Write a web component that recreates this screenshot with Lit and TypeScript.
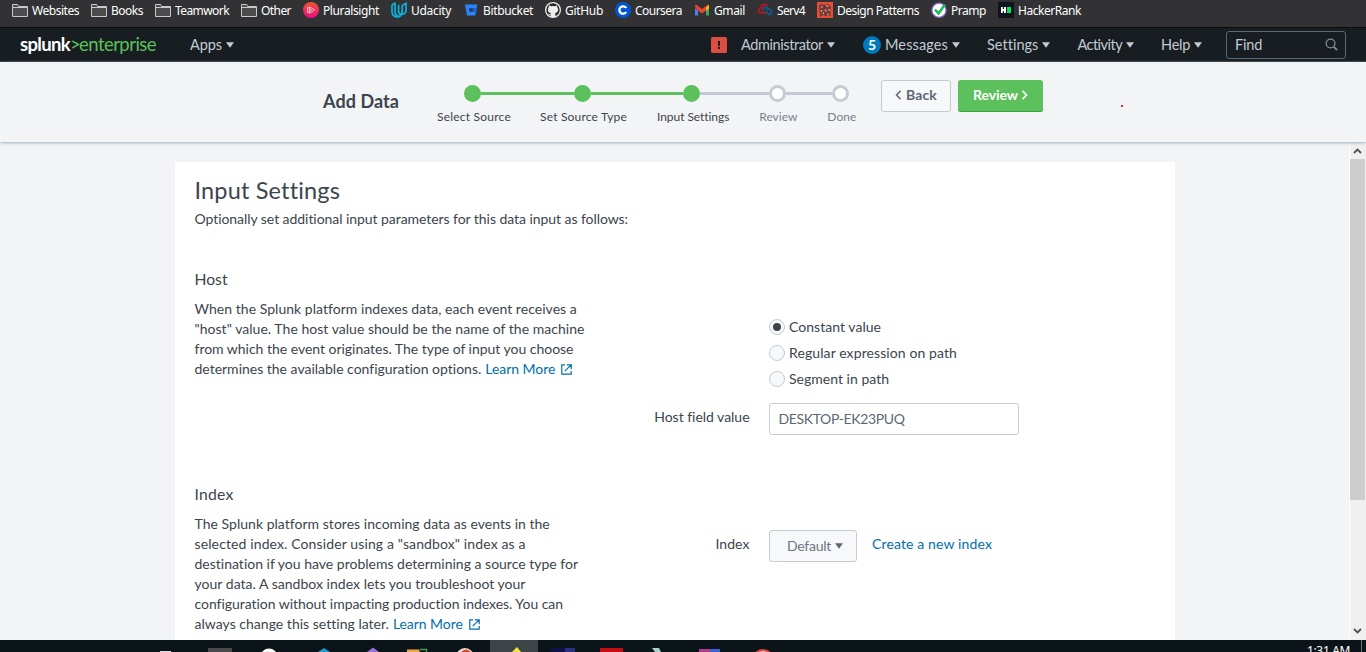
import { LitElement, html, css, svg } from "lit";
import { customElement, property, query } from "lit/decorators.js";

/** A single line of text tracked out (or in) so that it spans a given width. */
@customElement("fit-text")
class FitText extends LitElement {
  @property() text = "";
  @property({ type: Number }) w = 0;
  @query(".t") t!: HTMLElement;
  static styles = css`
    :host { display: inline-block; white-space: pre; }
    .t { display: inline-block; }
  `;
  updated() {
    this.t.style.letterSpacing = "0";
    const natural = this.t.getBoundingClientRect().width;
    this.t.style.letterSpacing = `${(this.w - natural) / this.text.length}px`;
  }
  render() {
    return html`<span class="t">${this.text}</span>`;
  }
}

const fit = (text: string, w: number) => html`<fit-text .text=${text} .w=${w}></fit-text>`;

const folder = svg`<path d="M.5 2.5h5.2l1 2h8.8v10H.5z" fill="#4b4b4d" stroke="#c9c9ca"/><path d="M1 5.5h14" stroke="#c9c9ca"/>`;

const icons: Record<string, unknown> = {
  folder,
  pluralsight: svg`<defs><linearGradient id="ps" x2="0" y2="1"><stop offset="0" stop-color="#f0552f"/><stop offset="1" stop-color="#ec0b86"/></linearGradient></defs><circle cx="8" cy="8" r="8" fill="url(#ps)"/><path d="M6.5 4.8l5.2 3.2-5.2 3.2zM4.5 5.3v5.4l4-2.7z" fill="none" stroke="#ffc9cf" stroke-width=".9"/>`,
  udacity: svg`<path d="M1 2.8l3-1.4v8.2c0 2.8 1.6 4.6 4 4.6M1 2.8v6.8c0 3.6 2.2 5.3 4.8 5.3 3.4 0 5.4-2 5.4-5.5V3.2M7.6 2.7v6.5c0 2 .9 3.1 2.7 3.1 3 0 4.8-1.6 4.8-4.6V1.4l-3.7 1.9" fill="none" stroke="#08b3df" stroke-width="1.7"/>`,
  bitbucket: svg`<path d="M2 2.5h12.3l-2 11H4z" fill="#2684ff"/><path d="M6 6h8l-.6 4H6.8z" fill="#1763d8"/><path d="M6.1 6.4h3.9l-.6 3.2H6.7z" fill="#323234"/>`,
  github: svg`<circle cx="8" cy="8" r="8" fill="#eee"/><circle cx="8" cy="8" r="6.7" fill="#26272b"/><path d="M4 3.2l2 1.1q2-.5 4 0l2-1.1.4 2.4q.9 1 .7 2.5c-.2 2-1.3 2.9-3.2 3.2q.6.6.6 1.8v2H5.7v-1.8c-2 .3-2-1.4-3-1.8 1.4-.2 1.6 1.1 3 .8q0-.7.4-1.1C4 10.800 3 10 2.900 8q0-1.400.7-2.400z" fill="#eee"/>`,
  coursera: svg`<circle cx="8" cy="8" r="8" fill="#0056d2"/><path d="M11.200 10a3.700 3.700 0 1 1 0-4" fill="none" stroke="#fff" stroke-width="2.300"/>`,
  gmail: svg`<path d="M1 3.500v10h3V8z" fill="#4285f4"/><path d="M12 8v5.500h3v-10z" fill="#34a853"/><path d="M1 3v3.500l3 2.300V4.600z" fill="#c5221f"/><path d="M12 4.600v4.200l3-2.300V3z" fill="#fbbc04"/><path d="M2 2.500L8 7l6-4.500 1 1.500-3 4.600-4 3-4-3L1 4z" fill="#ea4335"/><path d="M12 5.200L15 3v3.200l-3 2.400z" fill="#fbbc04"/>`,
  serv4: svg`<path d="M9 10.700H4.300C.5 10.300 .8 6 4 6c.7-4 4.600-4.200 6.500-1.800" fill="none" stroke="#b4161f" stroke-width="2"/><path d="M6 8.600c-.5-3.300 3.700-4.200 5-1.700 3.700-.2 4.900 4.300 1.400 5.600L8.500 9.300" fill="none" stroke="#17568a" stroke-width="2"/>`,
  patterns: svg`<path d="M0 0h16v16H0z" fill="#e94b37"/><path d="M2 3l3-1 2 1 4-1 3 3-1 4 1 5-3-1-2 1-3-1-3 2z" fill="#6b3a34"/><path d="M4 4.500l1.500 1M9 3.500l2.500 1M4 8l1 2M8 7.500l1.500 2M12 7v2M6 12l1-1.500M11 11.500v1.500" stroke="#d9b5a6" stroke-width="1.200"/><path d="M6 6.500l2 4M10 5.500l1 3M4 11v2" stroke="#c9271c"/>`,
  pramp: svg`<circle cx="8" cy="8.200" r="7.100" fill="#fff" stroke="#8a63c9" stroke-width="1.300"/><path d="M4 7.500l3.500 4L14 2.500" fill="none" stroke="#1bb85a" stroke-width="2.600"/>`,
  hackerrank: svg`<path d="M0 0h16v16H0z" fill="#0e141e"/><path d="M3 5h1.800v2H6V5h2v6H6V9H4.800v2H3z" fill="#fff"/><path d="M9 5h4v6H9z" fill="#05e35e"/>`,
};

const bookmarks: [string, string, number][] = [
  ["folder", "Websites", 47], ["folder", "Books", 32], ["folder", "Teamwork", 54], ["folder", "Other", 30],
  ["pluralsight", "Pluralsight", 56], ["udacity", "Udacity", 40], ["bitbucket", "Bitbucket", 50],
  ["github", "GitHub", 38], ["coursera", "Coursera", 47], ["gmail", "Gmail", 31], ["serv4", "Serv4", 28],
  ["patterns", "Design Patterns", 82], ["pramp", "Pramp", 35], ["hackerrank", "HackerRank", 63],
];

const hostText: [string, number][] = [
  ["When the Splunk platform indexes data, each event receives a", 382],
  ['"host" value. The host value should be the name of the machine', 390],
  ["from which the event originates. The type of input you choose", 379],
  ["determines the available configuration options.", 287],
];
const indexText: [string, number][] = [
  ["The Splunk platform stores incoming data as events in the", 355],
  ['selected index. Consider using a "sandbox" index as a', 331],
  ["destination if you have problems determining a source type for", 384],
  ["your data. A sandbox index lets you troubleshoot your", 331],
  ["configuration without impacting production indexes. You can", 369],
  ["always change this setting later.", 194],
];

@customElement("app-root")
class AppRoot extends LitElement {
  static styles = css`
    :host { display: flex; flex-direction: column; width: 1366px; height: 652px; overflow: hidden;
      font: 14px/20px Lato, "Open Sans", sans-serif; color: #3c444d; background: #f2f4f5; }
    * { box-sizing: border-box; }
    svg { display: block; flex: none; }
    .bookmarks { flex: none; display: flex; gap: 12px; height: 28px; padding: 2px 12px 0; background: #323234;
      border-bottom: 1px solid #0c0d0e; color: #fff; font: 12px/17px "Noto Sans", "Open Sans", sans-serif; }
    .bm { display: flex; gap: 4px; height: 17px; }
    .nav { flex: none; display: flex; align-items: center; height: 34px; padding: 0 20px; background: #171d21;
      border-bottom: 1px solid #2b3033; color: #c3cbd4; font-size: 14.500px; }
    .logo { display: flex; width: 136px; font-size: 18.500px; line-height: 24px; color: #5cc05c; padding-bottom: 1px; }
    .logo b { color: #fff; font-weight: 700; }
    .menu { display: flex; align-items: center; gap: 4px; }
    .caret { width: 8px; height: 6px; fill: currentColor; }
    .apps { margin-left: 34px; }
    .alert { margin-left: 477px; width: 16px; height: 16px; }
    .admin { margin-left: 14px; }
    .messages { margin-left: 28px; }
    .badge { width: 18px; height: 18px; border-radius: 50%; background: #007abd; color: #fff; font-weight: 700;
      font-size: 14px; line-height: 18px; text-align: center; }
    .gap27 { margin-left: 27px; }
    .find { display: flex; align-items: center; justify-content: space-between; margin-left: 24px; width: 120px;
      height: 28px; border: 1px solid #5c6773; border-radius: 3px; padding: 0 7px 0 8px; }
    .head { flex: none; display: flex; align-items: flex-start; height: 80px; padding-left: 323px; background: #f2f4f5;
      box-shadow: 0 1px 3px #9fb0c0; z-index: 1; }
    .head h1 { margin: 27px 0 0; width: 114px; font-size: 18px; line-height: 24px; font-weight: 700; }
    .steps { width: 444px; padding-top: 23px; }
    .track { display: flex; align-items: center; padding-left: 27px; height: 17px; }
    .dot { width: 17px; height: 17px; border-radius: 50%; border: 3px solid #c3cbd4; background: #fff; }
    .done { background: #5cc05c; border-color: #5cc05c; }
    .bar { height: 3px; background: #c3cbd4; }
    .green { background: #5cc05c; }
    .b1 { width: 93px; } .b2 { width: 92px; } .b3 { width: 69px; } .b4 { width: 46px; }
    .labels { display: flex; margin-top: 6px; font-size: 12px; line-height: 18px; }
    .labels .l2 { margin-left: 29px; }
    .labels .l3, .labels .l4 { margin-left: 30px; }
    .muted { color: #76828e; }
    .btn { display: flex; align-items: center; height: 32px; margin-top: 18px; padding-bottom: 2px; border-radius: 3px; font-weight: 700; }
    .back { width: 70px; padding-left: 13px; gap: 4px; border: 1px solid #c3cbd4; background: #f7f8fa; color: #5c6773; }
    .review { width: 85px; padding-left: 15px; gap: 3px; margin-left: 7px; background: #5cc05c; color: #fff;
      box-shadow: inset 0 -1px #40a540; }
    .spot { width: 1.500px; height: 1.500px; background: #e42b2b; margin: 43px 0 0 78px; }
    .main { flex: none; display: flex; justify-content: space-between; height: 498px; padding-left: 175px; overflow: hidden; }
    .card { width: 1000px; height: 478px; margin-top: 20px; background: #fff; padding: 14px 19px 0 19.500px; overflow: hidden; }
    h2 { margin: 0; font-size: 23.500px; line-height: 29px; padding-bottom: 1px; font-weight: 400; }
    .sub { height: 20px; margin: 3px 0 40px; }
    .section { display: grid; grid-template-columns: 420px 115px 1fr; column-gap: 20px; height: 215px; }
    .section + .section { padding: 0; }
    h3 { margin: 0 0 10px; font-size: 15.700px; line-height: 20px; font-weight: 400; }
    .line { display: flex; height: 20px; }
    .link { color: #006eaa; }
    .more { display: flex; gap: 6px; margin-left: 4px; }
    .more svg { margin-top: 5px; }
    .label { display: flex; justify-content: flex-end; }
    .host-label { padding-top: 138px; }
    .idx-label { padding-top: 50px; }
    .radios { padding-top: 45px; margin-left: -.5px; }
    .radio { display: flex; align-items: center; gap: 4px; height: 26px; }
    .ring { display: grid; place-items: center; width: 16px; height: 16px; border: 1px solid #c3cbd4; border-radius: 50%; background: #f7f8fa; }
    .pip { width: 8px; height: 8px; border-radius: 50%; background: #3c444d; }
    .input { width: 250px; height: 32px; margin-top: 11px; border: 1px solid #c3cbd4; border-radius: 3px; padding: 5px 8.500px; color: #5c6773; }
    .pick { display: flex; padding-top: 46px; gap: 15px; margin-left: -.5px; }
    .pick .link { padding-top: 4px; }
    .select { display: flex; align-items: center; gap: 4px; width: 88px; height: 32px; border: 1px solid #c3cbd4; border-radius: 3px;
      background: #f7f8fa; color: #6b7785; padding: 0 0 1px 17px; }
    .select .caret { color: #5c6773; }
    .scroll { display: flex; flex-direction: column; width: 17px; background: #f0f0f0; border-left: 1px solid #fff; padding: 6px 1px 6px 0; }
    .scroll svg { margin-left: 3px; }
    .thumb { height: 341px; margin: 5px 0 auto; background: #cdcdcd; }
    .task { flex: none; display: flex; height: 12px; background: #0b1419; overflow: hidden; color: #fff; font: 12px/16px "Noto Sans", "Open Sans", sans-serif; }
    .clock { padding-top: 3px; margin-left: 7px; height: 20px; }
    .edge { width: 1px; height: 12px; background: #69737a; margin-left: 11px; }
  `;

  caret() {
    return html`<svg class="caret" viewBox="0 0 8 6"><path d="M0 .3h8L4 5.700z"/></svg>`;
  }
  menu(cls: string, text: string, w: number) {
    return html`<div class="menu ${cls}">${fit(text, w)}${this.caret()}</div>`;
  }
  lines(rows: [string, number][]) {
    return rows.map(([t, w], i) => html`<div class="line">${fit(t, w)}${i === rows.length - 1
      ? html`<span class="link more">${fit("Learn More", 70)}<svg width="11" height="11" viewBox="0 0 11 11" fill="none" stroke="currentColor" stroke-width="1.200"><path d="M4 .8H.8v9.400h9.400V7M3.800 7.200l5.800-5.800M5.800.8h4.400v4.400"/></svg></span>`
      : ""}</div>`);
  }
  radio(text: string, w: number, on = false) {
    return html`<div class="radio"><span class="ring">${on ? html`<span class="pip"></span>` : ""}</span>${fit(text, w)}</div>`;
  }

  render() {
    return html`
      <div class="bookmarks">${bookmarks.map(([i, t, w]) => html`<div class="bm"><svg width="16" height="16" viewBox="0 0 16 16">${icons[i]}</svg>${fit(t, w)}</div>`)}</div>
      <div class="nav">
        <div class="logo"><b>${fit("splunk", 50)}</b>${fit(">", 9)}${fit("enterprise", 77)}</div>
        ${this.menu("apps", "Apps", 32)}
        <svg class="alert" viewBox="0 0 16 16"><rect width="16" height="16" rx="1.500" fill="#dc4e41"/><path d="M7 4h2v5H7zM7 10h2v2H7z" fill="#171d21"/></svg>
        ${this.menu("admin", "Administrator", 82)}
        <div class="menu messages"><span class="badge">5</span>${fit("Messages", 63)}${this.caret()}</div>
        ${this.menu("gap27", "Settings", 51)}
        ${this.menu("gap27", "Activity", 45)}
        ${this.menu("gap27", "Help", 29)}
        <div class="find">${fit("Find", 27)}<svg width="13" height="13" viewBox="0 0 14 14" fill="none" stroke="#818d99"><circle cx="6" cy="6" r="4.700" stroke-width="1.400"/><path d="M9.500 9.500l3.500 3.500" stroke-width="2"/></svg></div>
      </div>
      <div class="head">
        <h1>${fit("Add Data", 76)}</h1>
        <div class="steps">
          <div class="track">
            <span class="dot done"></span><span class="bar green b1"></span><span class="dot done"></span><span class="bar green b2"></span><span class="dot done"></span><span class="bar b3"></span><span class="dot"></span><span class="bar b4"></span><span class="dot"></span>
          </div>
          <div class="labels">
            ${fit("Select Source", 74)}<span class="l2">${fit("Set Source Type", 87)}</span><span class="l3">${fit("Input Settings", 72)}</span><span class="l4 muted">${fit("Review", 38)}</span><span class="l3 muted">${fit("Done", 29)}</span>
          </div>
        </div>
        <div class="btn back"><svg width="7" height="10" viewBox="0 0 7 10"><path d="M5.500.8L1.500 5l4 4.200" fill="none" stroke="currentColor" stroke-width="1.500"/></svg>${fit("Back", 31)}</div>
        <div class="btn review">${fit("Review", 45)}<svg width="7" height="10" viewBox="0 0 7 10"><path d="M1.500.8l4 4.200-4 4.200" fill="none" stroke="currentColor" stroke-width="1.700"/></svg></div>
        <span class="spot"></span>
      </div>
      <div class="main">
        <div class="card">
          <h2>${fit("Input Settings", 145)}</h2>
          <div class="sub">${fit("Optionally set additional input parameters for this data input as follows:", 434)}</div>
          <div class="section">
            <div><h3>${fit("Host", 33)}</h3>${this.lines(hostText)}</div>
            <div class="label host-label">${fit("Host field value", 95)}</div>
            <div class="radios">
              ${this.radio("Constant value", 92, true)}
              ${this.radio("Regular expression on path", 168)}
              ${this.radio("Segment in path", 100)}
              <div class="input">${fit("DESKTOP-EK23PUQ", 126)}</div>
            </div>
          </div>
          <div class="section">
            <div><h3>${fit("Index", 39)}</h3>${this.lines(indexText)}</div>
            <div class="label idx-label">${fit("Index", 34)}</div>
            <div class="pick"><div class="select">${fit("Default", 44)}${this.caret()}</div><span class="link">${fit("Create a new index", 120)}</span></div>
          </div>
        </div>
        <div class="scroll">
          <svg width="9" height="6" viewBox="0 0 9 6"><path d="M1 5l3.500-3.500L8 5" fill="none" stroke="#505050" stroke-width="1.800"/></svg>
          <div class="thumb"></div>
          <svg width="9" height="6" viewBox="0 0 9 6"><path d="M1 1l3.500 3.500L8 1" fill="none" stroke="#505050" stroke-width="1.800"/></svg>
        </div>
      </div>
      <div class="task">
        <svg width="1300" height="12" viewBox="0 0 1300 12">
          <path d="M160 11h11v1h-11z" fill="#ddd"/>
          <path d="M208 8h24v4h-24z" fill="#4a4a4c"/>
          <circle cx="269" cy="17" r="8.500" fill="#fff"/>
          <path d="M318 12l6-4 6 4z" fill="#1c9ad6"/>
          <path d="M367 12l6-4.500 6 4.500z" fill="#9a6fd8"/>
          <path d="M407 12V9.500h12l1 2.500z" fill="#f0a742"/><path d="M420 9.500h6.500V12" fill="none" stroke="#3f9a4a" stroke-width="1.500"/>
          <circle cx="465" cy="17" r="9" fill="#f4ded6"/><path d="M461 12q5-5 10 0z" fill="#d44a2e"/>
          <path d="M490 0h48v12h-48z" fill="#3c4448"/>
          <path d="M512 12l5-5 4 5z" fill="#f7e43a"/>
          <path d="M551 8h24v4h-24z" fill="#10104a"/><path d="M565 8h10v4h-10z" fill="#2a3080"/>
          <path d="M600 8h23v4h-23z" fill="#c40d12"/>
          <path d="M652 8h7l2 4h-6z" fill="#a9cfcd"/>
          <path d="M699 9h11v3h-11z" fill="#b23a8c"/><path d="M710 9h10v3h-10z" fill="#3a62d4"/>
          <circle cx="763" cy="20" r="11" fill="#e8433f"/><circle cx="763" cy="20" r="8.800" fill="#fff"/>
        </svg>
        <span class="clock">${fit("1:31 AM", 43)}</span>
        <span class="edge"></span>
      </div>
    `;
  }
}
